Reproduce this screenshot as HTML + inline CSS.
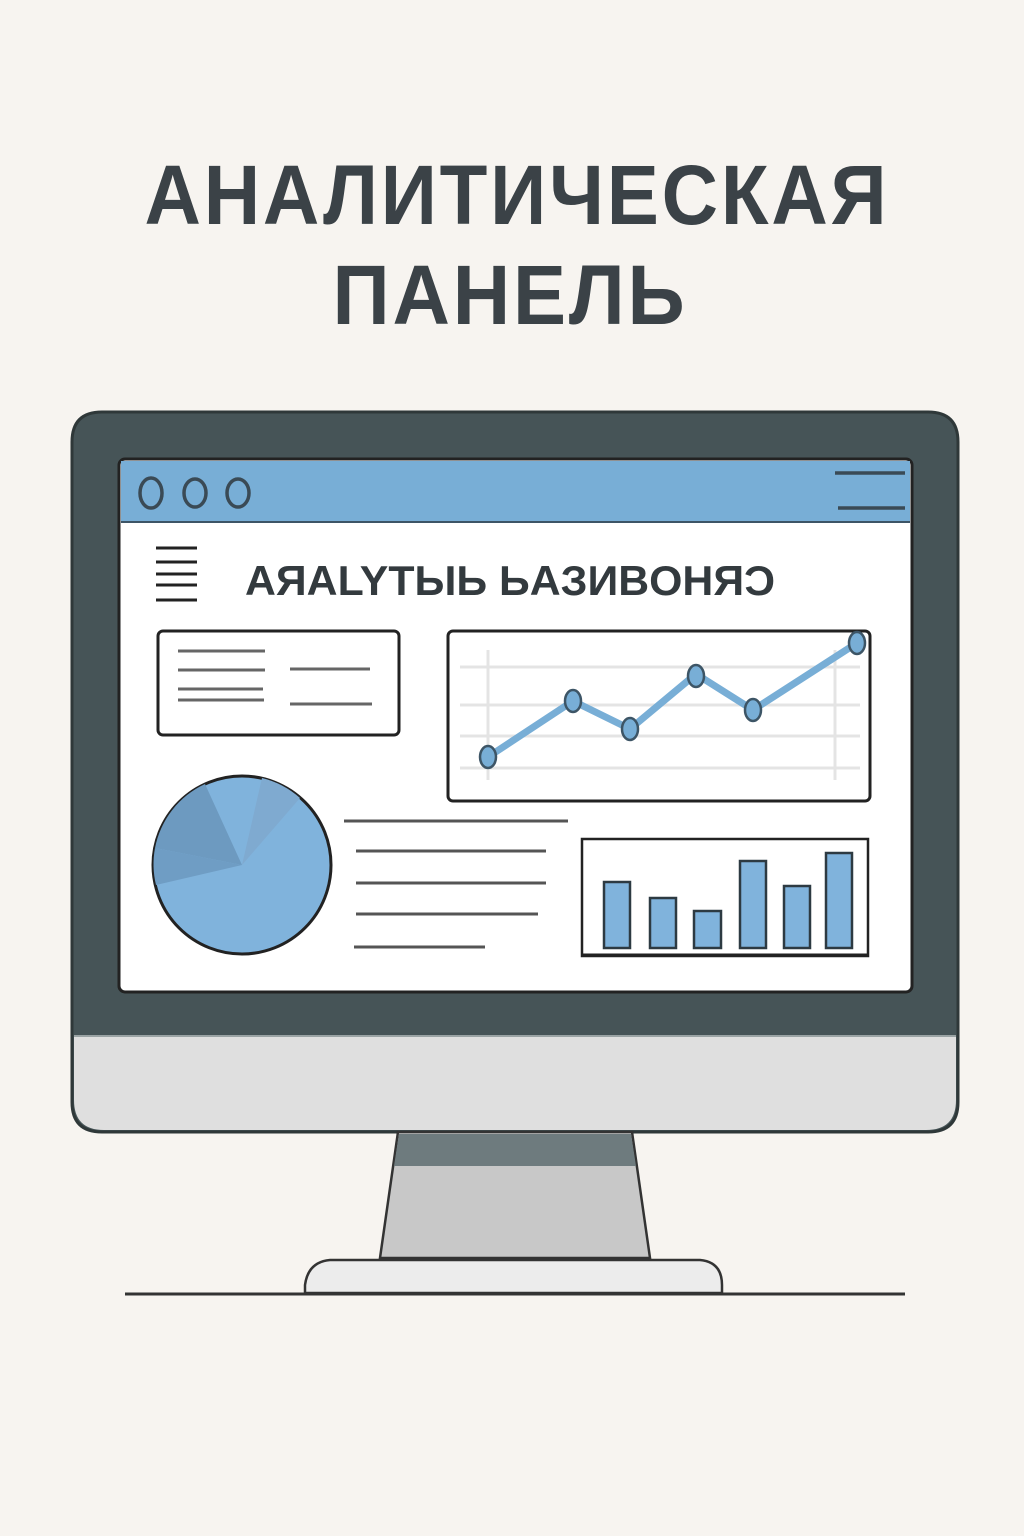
<!DOCTYPE html>
<html><head><meta charset="utf-8"><style>
html,body{margin:0;padding:0;width:1024px;height:1536px;background:#f7f4f0;overflow:hidden}
</style></head><body>
<svg width="1024" height="1536" viewBox="0 0 1024 1536" xmlns="http://www.w3.org/2000/svg">
<rect width="1024" height="1536" fill="#f7f4f0"/>
<text x="517" y="224" text-anchor="middle" font-family="Liberation Sans, DejaVu Sans, sans-serif" font-weight="bold" font-size="84" fill="#3b4247" letter-spacing="3" textLength="745" lengthAdjust="spacingAndGlyphs">АНАЛИТИЧЕСКАЯ</text>
<text x="510" y="324" text-anchor="middle" font-family="Liberation Sans, DejaVu Sans, sans-serif" font-weight="bold" font-size="84" fill="#3b4247" letter-spacing="3" textLength="355" lengthAdjust="spacingAndGlyphs">ПАНЕЛЬ</text>
<!-- monitor -->
<path d="M102 412 H928 Q958 412 958 442 V1102 Q958 1132 928 1132 H102 Q72 1132 72 1102 V442 Q72 412 102 412Z" fill="#465457" stroke="#2f3839" stroke-width="3"/>
<path d="M74 1036 H956 V1100 Q956 1130 926 1130 H104 Q74 1130 74 1100Z" fill="#dfdfdf"/>
<line x1="74" y1="1036" x2="956" y2="1036" stroke="#9aa3a4" stroke-width="2"/>
<!-- screen -->
<rect x="119" y="459" width="793" height="533" rx="6" fill="#fff" stroke="#222" stroke-width="3"/>
<path d="M121 461 H910 V521 H121Z" fill="#78aed6"/>
<line x1="121" y1="522" x2="910" y2="522" stroke="#3d5566" stroke-width="2"/>
<g fill="none" stroke="#3a4a55" stroke-width="3.5">
<ellipse cx="151" cy="493" rx="11" ry="15"/><ellipse cx="195" cy="493" rx="11" ry="14"/><ellipse cx="238" cy="493" rx="11" ry="14"/>
<line x1="835" y1="473" x2="905" y2="473"/><line x1="838" y1="508" x2="905" y2="508"/>
</g>
<g stroke="#222" stroke-width="3"><line x1="156" y1="548" x2="197" y2="548"/><line x1="156" y1="562" x2="197" y2="562"/><line x1="156" y1="574" x2="197" y2="574"/><line x1="156" y1="585" x2="197" y2="585"/><line x1="156" y1="600" x2="197" y2="600"/></g>
<text x="245" y="595" font-family="Liberation Sans, DejaVu Sans, sans-serif" font-weight="bold" font-size="42" fill="#333a3e" textLength="530" lengthAdjust="spacingAndGlyphs">AЯALYTЫЬ ЬAЗИBOHЯϽ</text>
<!-- small card -->
<rect x="158" y="631" width="241" height="104" rx="5" fill="#fff" stroke="#222" stroke-width="3"/>
<g stroke="#666" stroke-width="3"><line x1="178" y1="651" x2="265" y2="651"/><line x1="178" y1="670" x2="265" y2="670"/><line x1="178" y1="689" x2="263" y2="689"/><line x1="178" y1="700" x2="264" y2="700"/><line x1="290" y1="669" x2="370" y2="669"/><line x1="290" y1="704" x2="372" y2="704"/></g>
<!-- line chart -->
<rect x="448" y="631" width="422" height="170" rx="5" fill="#fff" stroke="#222" stroke-width="3"/>
<g stroke="#e4e4e4" stroke-width="3"><line x1="460" y1="667" x2="860" y2="667"/><line x1="460" y1="705" x2="860" y2="705"/><line x1="460" y1="736" x2="860" y2="736"/><line x1="460" y1="768" x2="860" y2="768"/><line x1="488" y1="650" x2="488" y2="780"/><line x1="835" y1="650" x2="835" y2="780"/></g>
<polyline points="488,757 573,701 630,729 696,674 753,710 857,643" fill="none" stroke="#78aed6" stroke-width="7" stroke-linejoin="round"/>
<g fill="#78aed6" stroke="#3d5566" stroke-width="2.5"><ellipse cx="488" cy="757" rx="8" ry="11"/><ellipse cx="573" cy="701" rx="8" ry="11"/><ellipse cx="630" cy="729" rx="8" ry="11"/><ellipse cx="696" cy="676" rx="8" ry="11"/><ellipse cx="753" cy="710" rx="8" ry="11"/><ellipse cx="857" cy="643" rx="8" ry="11"/></g>
<!-- pie -->
<circle cx="242" cy="865" r="89" fill="#80b3dc" stroke="#222" stroke-width="3"/>
<path d="M242 865 L155 848 A89 89 0 0 1 205 784Z" fill="#6d9ac0"/>
<path d="M242 865 L262 778 A89 89 0 0 1 300 798Z" fill="#7faad0"/>
<path d="M242 865 L155 848 A89 89 0 0 0 156 885Z" fill="#6f9dc4"/>
<!-- text lines -->
<g stroke="#555" stroke-width="3"><line x1="344" y1="821" x2="568" y2="821"/><line x1="356" y1="851" x2="546" y2="851"/><line x1="356" y1="883" x2="546" y2="883"/><line x1="356" y1="914" x2="538" y2="914"/><line x1="354" y1="947" x2="485" y2="947"/></g>
<!-- bar chart -->
<rect x="582" y="839" width="286" height="117" fill="#fff" stroke="#222" stroke-width="2.5"/>
<g fill="#80b3dc" stroke="#2d3a42" stroke-width="2.5"><rect x="604" y="882" width="26" height="66"/><rect x="650" y="898" width="26" height="50"/><rect x="694" y="911" width="27" height="37"/><rect x="740" y="861" width="26" height="87"/><rect x="784" y="886" width="26" height="62"/><rect x="826" y="853" width="26" height="95"/></g>
<line x1="582" y1="955" x2="868" y2="955" stroke="#222" stroke-width="3"/>
<!-- stand -->
<path d="M398 1132 H632 L650 1258 H380Z" fill="#c8c8c8" stroke="#333" stroke-width="2.5"/>
<path d="M399 1134 H631 L636 1166 H394Z" fill="#6e7b7e"/>
<path d="M330 1260 H700 Q722 1262 722 1285 V1293 H305 V1285 Q308 1262 330 1260Z" fill="#ececec" stroke="#333" stroke-width="2.5"/>
<line x1="125" y1="1294" x2="905" y2="1294" stroke="#333" stroke-width="3"/>
</svg>
</body></html>
